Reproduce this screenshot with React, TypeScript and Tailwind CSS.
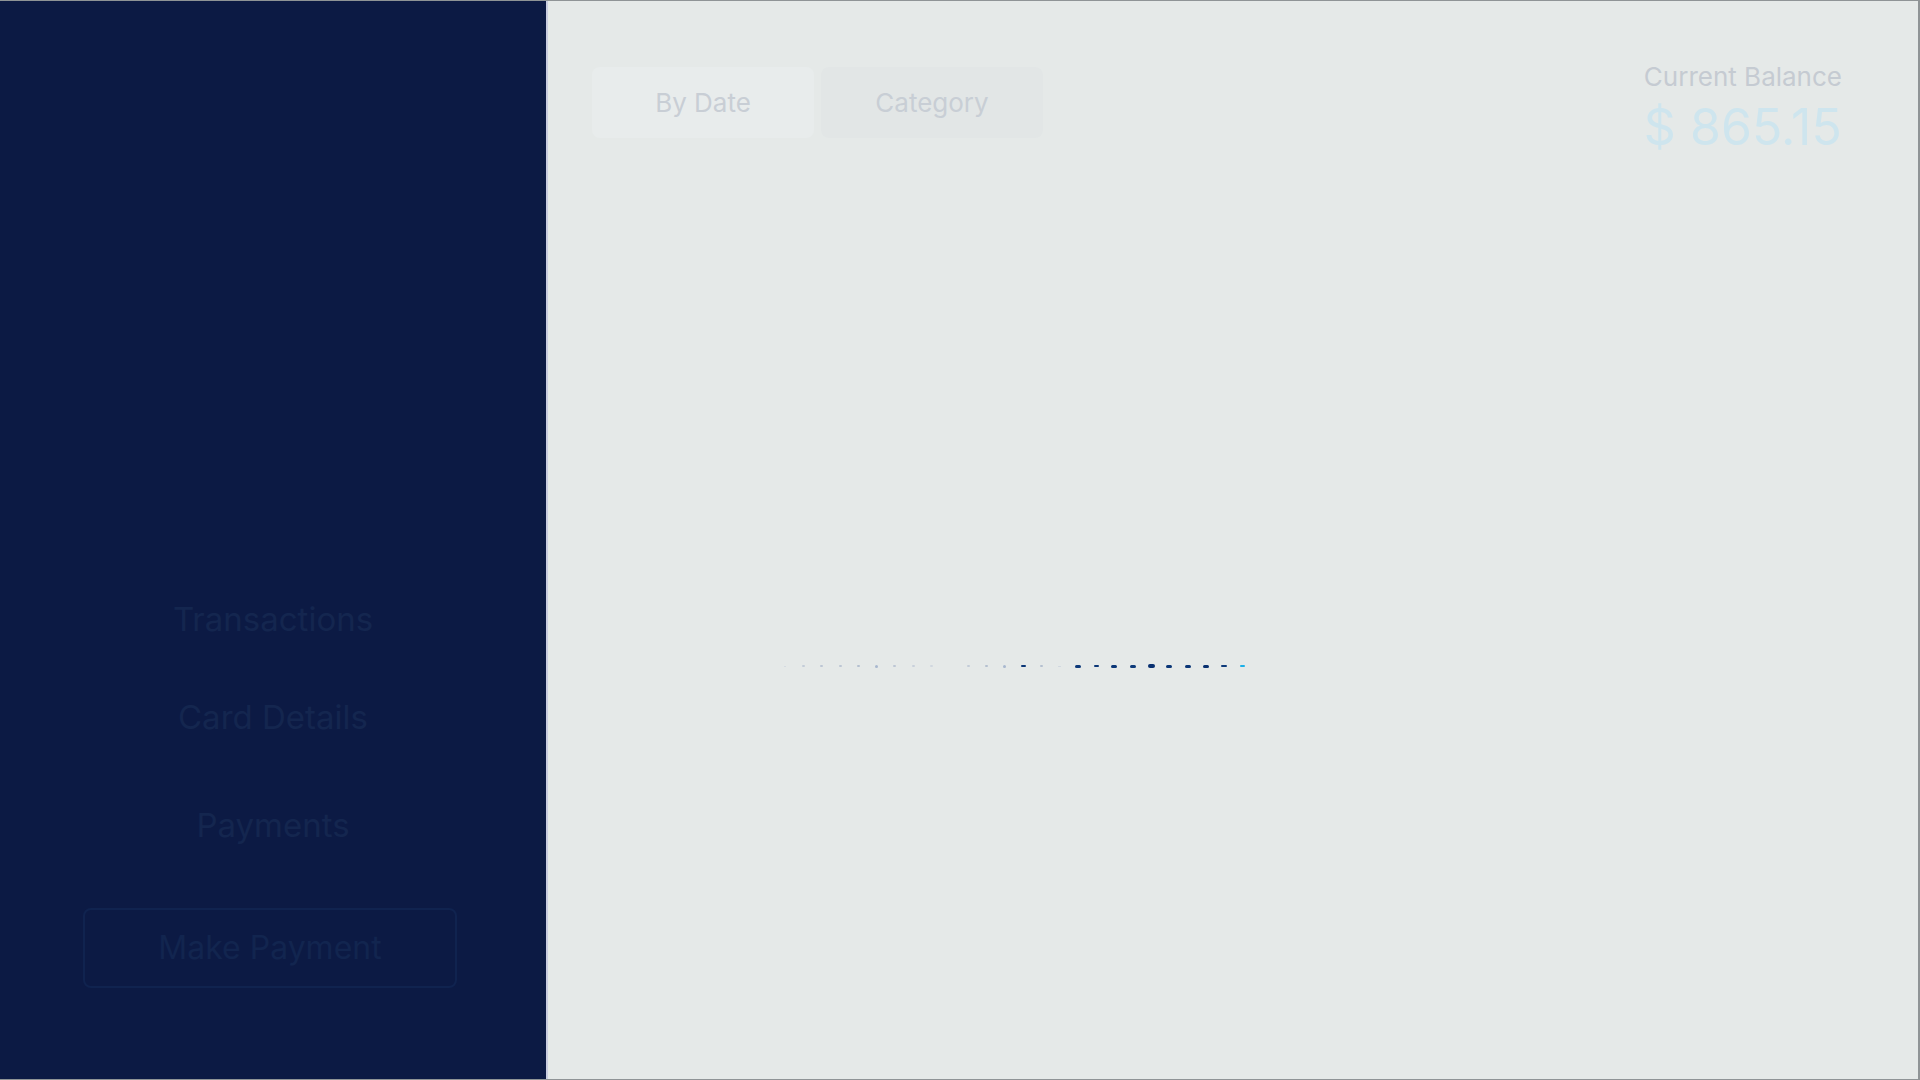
import React, { useState } from 'react';

const dots: { w: number; h: number; c: string }[] = [
  { w: 2, h: 1, c: '#d3d9e0' },
  { w: 3, h: 2, c: '#c3ccd8' },
  { w: 3, h: 2, c: '#bcc6d4' },
  { w: 3, h: 2, c: '#bcc6d4' },
  { w: 3, h: 2, c: '#b5c0d0' },
  { w: 3, h: 3, c: '#a8b8cf' },
  { w: 3, h: 2, c: '#bcc6d4' },
  { w: 3, h: 2, c: '#c8d0db' },
  { w: 3, h: 2, c: '#d0d7df' },
  { w: 0, h: 0, c: 'transparent' },
  { w: 3, h: 2, c: '#c3ccd8' },
  { w: 3, h: 2, c: '#b5c0d0' },
  { w: 3, h: 3, c: '#a8b8cf' },
  { w: 5, h: 2, c: '#0a3677' },
  { w: 3, h: 2, c: '#b5c0d0' },
  { w: 3, h: 1, c: '#d0d7df' },
  { w: 6, h: 3, c: '#0d3a7a' },
  { w: 5, h: 2, c: '#0a3677' },
  { w: 6, h: 3, c: '#0a3677' },
  { w: 6, h: 3, c: '#0d3a7a' },
  { w: 7, h: 4, c: '#083070' },
  { w: 6, h: 3, c: '#0a3677' },
  { w: 6, h: 3, c: '#0a3677' },
  { w: 6, h: 3, c: '#083070' },
  { w: 6, h: 2, c: '#0d3a7a' },
  { w: 5, h: 2, c: '#1ab0e8' },
];

const navItems = ['Transactions', 'Card Details', 'Payments'];

const App: React.FC = () => {
  const [tab, setTab] = useState<'date' | 'category'>('date');

  return (
    <div
      className="w-[1920px] h-[1080px] flex border-t border-r-2 border-b border-[#8f9496] overflow-hidden"
      style={{ fontFamily: 'Inter, "Open Sans", sans-serif' }}
    >
      {/* Sidebar */}
      <aside className="w-[548px] shrink-0 bg-[#0c1a44] border-r-2 border-[#c9cde0] flex flex-col items-center pt-[595px]">
        <nav className="flex flex-col items-center">
          {navItems.map((item, i) => (
            <button
              key={item}
              className={`text-[33px] leading-[46px] text-[#14264f] ${i === 1 ? 'mt-[52px]' : ''} ${i === 2 ? 'mt-[62px]' : ''}`}
            >
              {item}
            </button>
          ))}
        </nav>
        <button className="mt-[60px] w-[374px] h-[80px] rounded-lg border-2 border-[#10234f] text-[32px] text-[#12254f] -ml-[6px]">
          Make Payment
        </button>
      </aside>

      {/* Main */}
      <main className="flex-1 bg-[#e5e9e8] flex flex-col">
        <header className="flex justify-between items-start pl-[44px] pr-[76px] pt-[60px]">
          <div className="flex gap-[7px] mt-[6px]">
            <button
              onClick={() => setTab('date')}
              className={`w-[222px] h-[71px] rounded-lg text-[26px] text-[#c8ced5] ${tab === 'date' ? 'bg-[#e8ecec]' : 'bg-[#e2e6e6]'}`}
            >
              By Date
            </button>
            <button
              onClick={() => setTab('category')}
              className={`w-[222px] h-[71px] rounded-lg text-[26px] text-[#c8ced5] ${tab === 'category' ? 'bg-[#e8ecec]' : 'bg-[#e2e6e6]'}`}
            >
              Category
            </button>
          </div>
          <div className="flex flex-col">
            <span className="text-[26px] leading-[32px] text-[#c5cbd2]">Current Balance</span>
            <span className="mt-[4px] text-[50px] leading-[60px] text-[#cee5ee]">$ 865.15</span>
          </div>
        </header>

        {/* loading indicator */}
        <div className="ml-[228px] mt-[505px] flex items-center h-[8px]">
          {dots.map((d, i) => (
            <div key={i} className="w-[18.3px] flex justify-center items-center">
              <span
                className="block rounded-full"
                style={{ width: d.w, height: d.h, backgroundColor: d.c }}
              />
            </div>
          ))}
        </div>
      </main>
    </div>
  );
};

export default App;
